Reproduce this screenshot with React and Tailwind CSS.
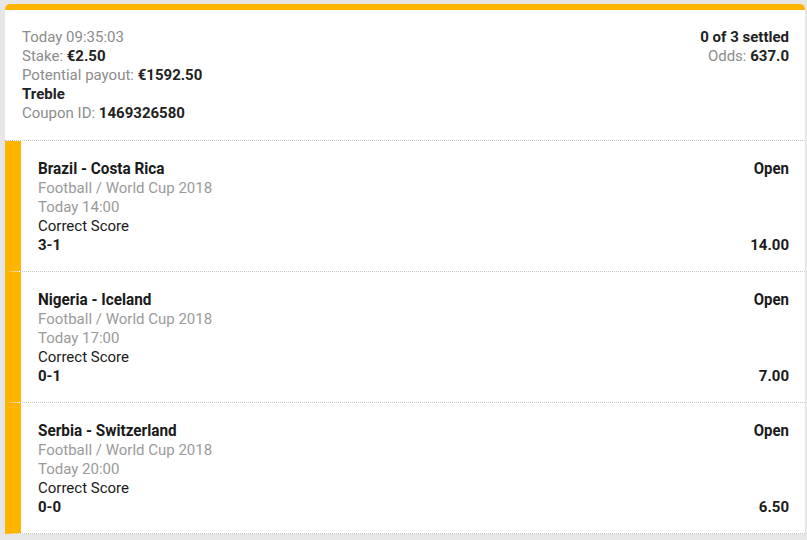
import React from "react";

const bets = [
  { match: "Brazil - Costa Rica", time: "Today 14:00", pick: "3-1", odds: "14.00" },
  { match: "Nigeria - Iceland", time: "Today 17:00", pick: "0-1", odds: "7.00" },
  { match: "Serbia - Switzerland", time: "Today 20:00", pick: "0-0", odds: "6.50" },
];

export default function App() {
  return (
    <div className="min-h-[540px] bg-[#e6e6e6] pt-[4px] pl-[5px] pr-[2px] font-['Roboto',sans-serif] text-[15px] leading-[19px]">
      <div className="bg-white rounded-t-[5px] border-t-[6px] border-[#ffb400]">
        <div className="flex justify-between pl-[17px] pr-[16px] pt-[18px] pb-[17px] border-b border-dotted border-[#c8c8c8]">
          <div className="text-[#8c8c8c]">
            <div>Today 09:35:03</div>
            <div>
              Stake: <span className="font-bold text-[#222]">€2.50</span>
            </div>
            <div>
              Potential payout: <span className="font-bold text-[#222]">€1592.50</span>
            </div>
            <div className="font-bold text-[#222]">Treble</div>
            <div>
              Coupon ID: <span className="font-bold text-[#222]">1469326580</span>
            </div>
          </div>
          <div className="text-right text-[#8c8c8c]">
            <div className="font-bold text-[#222]">0 of 3 settled</div>
            <div>
              Odds: <span className="font-bold text-[#222]">637.0</span>
            </div>
          </div>
        </div>
        {bets.map((b) => (
          <div
            key={b.match}
            className="flex justify-between border-l-[16px] border-l-[#ffb400] [border-left-style:solid] border-b border-b-[#c8c8c8] [border-bottom-style:dotted] pl-[17px] pr-[16px] pt-[16px] pb-[16px]"
          >
            <div>
              <div className="h-[22px] leading-[22px] text-[17px] font-bold text-[#1a1a1a] origin-left scale-x-[0.9] whitespace-nowrap">
                {b.match}
              </div>
              <div className="text-[#9a9a9a]">Football / World Cup 2018</div>
              <div className="text-[#9a9a9a]">{b.time}</div>
              <div className="text-[#1a1a1a]">Correct Score</div>
              <div className="font-bold text-[#1a1a1a]">{b.pick}</div>
            </div>
            <div className="flex flex-col justify-between items-end">
              <div className="h-[22px] leading-[22px] text-[17px] font-bold text-[#1a1a1a] origin-right scale-x-[0.88]">
                Open
              </div>
              <div className="font-bold text-[#1a1a1a]">{b.odds}</div>
            </div>
          </div>
        ))}
      </div>
    </div>
  );
}
